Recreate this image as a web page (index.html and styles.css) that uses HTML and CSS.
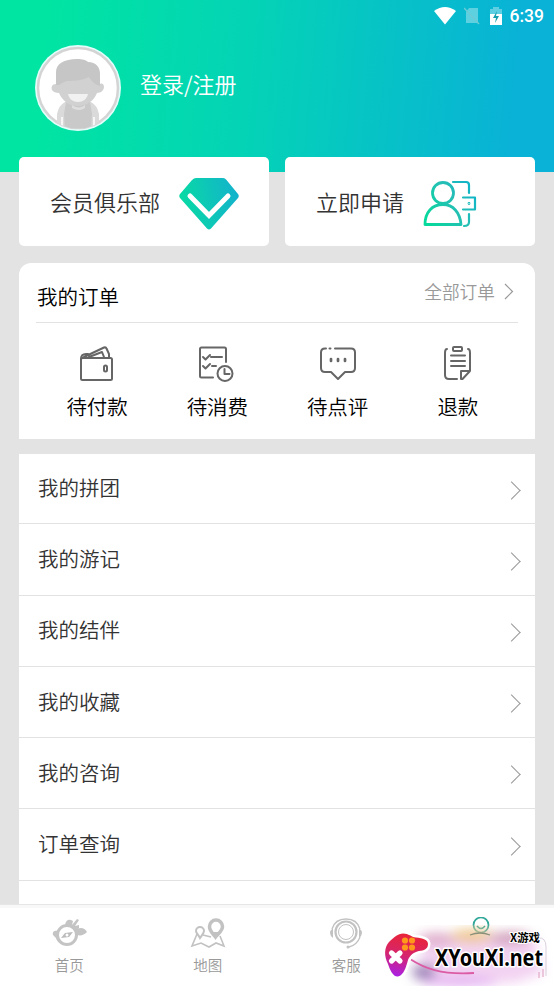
FILE: index.html
```html
<!DOCTYPE html>
<html lang="zh-CN">
<head>
<meta charset="utf-8">
<title>我的</title>
<link rel="stylesheet" href="styles.css">
</head>
<body>
<div class="phone">
  <main class="content">
    <header class="header">
      <div class="status">
        <svg class="wifi" width="22" height="18" viewBox="0 0 22 18"><path d="M0 4Q11-4 22 4L11 17.500Z" fill="#fff"/></svg>
        <svg class="sim" width="17" height="18" viewBox="0 0 17 18"><path d="M5 1h9v15H2V5z" fill="#fff" opacity=".35"/><path d="M0 1l15 16" stroke="#6ccbd5" stroke-width="1.500"/></svg>
        <svg class="battery" width="12" height="18" viewBox="0 0 12 18"><path d="M3 2V0h6v2h3v5H0V2z" fill="#fff" opacity=".35"/><path d="M0 7h12v11H0z" fill="#fff"/><path d="M7 4L3 11h3l-1 5 4-7H6z" fill="#159ead"/></svg>
        <span class="time">6:39</span>
      </div>
      <div class="profile">
        <svg class="avatar" width="88" height="88" viewBox="0 0 88 88">
          <defs><clipPath id="face"><circle cx="44" cy="44" r="40.500"/></clipPath></defs>
          <circle cx="44" cy="44" r="43" fill="#e3fdfa"/>
          <circle cx="44" cy="44" r="40" fill="#fff" stroke="#d4d4d4" stroke-width="2.500"/>
          <g clip-path="url(#face)">
            <path d="M31 58q-6 3-8 12v18h42V70q-2-9-8-12z" fill="#dadada"/>
            <path d="M32 58h24l2 12-1 18H31l-1-18z" fill="#c9c9c9"/>
            <path d="M28 73v15M60 73v15" stroke="#fff" stroke-width="1.500"/>
            <path d="M22 40c-4 0-5 3-4 6 1 2 4 3 7 3 4 9 11 13 19 13s16-5 19-13c4 0 7-3 7-6 0-4-3-4-5-3V28H22z" fill="#d1d1d1"/>
            <path d="M22 41V28c0-8 8-13 21-13 6 0 9 1 11 3 8 0 12 5 12 12v12l-3-1c-4-2-6-5-8-8-6 3-13 4-22 4-4 1-6 3-8 4z" fill="#c6c6c6"/>
            <path d="M34 50h20c-1 5-5 8-10 8s-9-3-10-8z" fill="#f1f1f1"/>
            <path d="M38 61q7 5 13 0v3q-6 4-13 0z" fill="#dedede"/>
          </g>
        </svg>
        <span class="login">登录/注册</span>
      </div>
    </header>

    <section class="promos">
      <a class="promo club"><span>会员俱乐部</span>
        <svg width="60" height="54" viewBox="0 0 60 54">
          <defs><linearGradient id="gem" x1="0" y1=".5" x2="1" y2=".35"><stop stop-color="#08dba3"/><stop offset="1" stop-color="#13b2cc"/></linearGradient></defs>
          <path d="M17 1h27q2 0 3.500 2L59 17q1.500 2 0 4L32 51.500q-2 2-4 0L1 21q-1.500-2 0-4L13 3q2-2 4-2z" fill="url(#gem)"/>
          <path d="M11 19l19 19.500L49 19" fill="none" stroke="#fff" stroke-width="5" stroke-linecap="round"/>
        </svg>
      </a>
      <a class="promo apply"><span>立即申请</span>
        <svg width="54" height="50" viewBox="0 0 54 50" fill="none" stroke="url(#person)" stroke-width="2.800" stroke-linecap="round" stroke-linejoin="round">
          <defs><linearGradient id="person" gradientUnits="userSpaceOnUse" x1="3" y1="42" x2="52" y2="12"><stop stop-color="#05d99b"/><stop offset=".6" stop-color="#26beb5"/><stop offset="1" stop-color="#0db4c9"/></linearGradient></defs>
          <circle cx="20" cy="14" r="10.500"/>
          <path d="M2 45.500c0-12 7-20 18-20 10 0 17 8 18 20z"/>
          <path d="M30 3h13q3 0 3 3v8M40 18.500h12v12H40M46 35v8q0 4-5 4" stroke-width="2.200"/>
          <circle cx="46" cy="24.500" r=".4" stroke-width="2"/>
        </svg>
      </a>
    </section>

    <section class="orders">
      <div class="orders-head"><h2>我的订单</h2><a class="all">全部订单<svg width="10" height="17" viewBox="0 0 10 17"><path d="M1 1l7.500 7.500L1 16" fill="none" stroke="#999" stroke-width="1.200"/></svg></a></div>
      <div class="order-types">
        <a class="type"><svg width="38" height="38" viewBox="0 0 38 38"><rect x="3" y="14" width="31" height="22" rx="1.500"/><path d="M3 15q0-5 5-5h2M6 13L26 3.500q2-.5 2.500 1L31 10v4M11 13l13-5 2 5"/><rect x="26" y="21.500" width="3" height="6" rx="1.500"/></svg>待付款</a>
        <a class="type"><svg width="38" height="38" viewBox="0 0 38 38"><g transform="translate(-2)"><path d="M30 18V5q0-1.500-1.500-1.500h-23Q4 3.500 4 5v27q0 1.500 1.500 1.500H17M7 13l2.500 2.500L14 11M15 13h11M7 22l2.500 2.500L14 20M16 22h4"/><circle cx="29" cy="29.500" r="7.500"/><path d="M28.500 25v5h5"/></g></svg>待消费</a>
        <a class="type"><svg width="38" height="38" viewBox="0 0 38 38"><path d="M7 4.500H6q-4 0-4 4V24q0 4 4 4h6l7 7 7-7h6q4 0 4-4V8.500q0-4-4-4H16M10.500 4.500h1"/><path d="M12 15v2M19 15v2M26 15v2" stroke-width="2.700"/></svg>待点评</a>
        <a class="type"><svg width="38" height="38" viewBox="0 0 38 38"><path d="M8 5q-2 0-2 4v22q0 4 4 4h8M29 5q2 0 2 4v18l-7.500 8H22v-8h9"/><rect x="14" y="3" width="9" height="4" rx="1"/><path d="M12 11.500h14M12 17h14M12 22h14"/></svg>退款</a>
      </div>
    </section>

    <nav class="menu">
      <a class="row"><span>我的拼团</span><i class="chevron"></i></a>
      <a class="row"><span>我的游记</span><i class="chevron"></i></a>
      <a class="row"><span>我的结伴</span><i class="chevron"></i></a>
      <a class="row"><span>我的收藏</span><i class="chevron"></i></a>
      <a class="row"><span>我的咨询</span><i class="chevron"></i></a>
      <a class="row"><span>订单查询</span><i class="chevron"></i></a>
      <a class="row"></a>
    </nav>
  </main>

  <footer class="tabs">
    <a class="tab"><svg width="36" height="32" viewBox="0 0 36 32">
      <circle cx="16" cy="18" r="9.500" fill="none" stroke="#c4c4c4" stroke-width="3"/>
      <path d="M14 8q1-6 6-5l2 1-1 4 5-6 2 1-4 6 4-1v3l-2 1c4-2 8-1 10 3-3 3-6 4-10 3l-2-6zM8 14c-4-1-7 0-6 4l3 3c1 4 5 7 10 7l-7-5z" fill="#c4c4c4"/>
      <path d="M10 21l4-5 8-1-4 5z" fill="#bbb"/><circle cx="16" cy="18" r="1.500" fill="#fff"/></svg>首页</a>
    <a class="tab"><svg width="36" height="32" viewBox="0 0 36 32" fill="none" stroke="#c2c2c2">
      <path d="M7 17L2 29l9-3 8 4 7-4 8 3-4-10M13 18l8 2" stroke-width="1.600"/>
      <path d="M10 21c-2-4-4-5-4-7a4 4 0 018 0c0 2-2 4-4 7z" stroke-width="2"/>
      <path d="M25.500 20c-3-4-6-6-6-10.500a6.500 6.500 0 0113 0c0 4.500-4 6.500-7 10.500z" stroke-width="3.500"/><path d="M22 15h7l-3.500 6z" fill="#c2c2c2" stroke="none"/></svg>地图</a>
    <a class="tab"><svg width="36" height="32" viewBox="0 0 36 32" fill="none" stroke="#c2c2c2">
      <circle cx="18" cy="15" r="10.500" stroke-width="2.200"/><circle cx="18" cy="15" r="7.500" stroke-width="1"/>
      <path d="M4 12Q7 2 18 2t14 10M32 20q-3 8-11 10" stroke-width="1.300"/><path d="M5 11q-6 5 0 10zM31 11q6 5 0 10z" fill="#c2c2c2" stroke="none"/><circle cx="20" cy="30" r="1.500" fill="#c2c2c2" stroke="none"/></svg>客服</a>
    <a class="tab mine"><svg width="36" height="32" viewBox="0 0 36 32" fill="none" stroke="#30a798"><circle cx="14" cy="8" r="7.500" stroke-width="1.700"/><path d="M10 9q4 5 8 0" stroke-width="1.500"/></svg></a>
  </footer>

  <aside class="watermark">
    <svg width="178" height="61" viewBox="0 0 178 61">
      <defs>
        <filter id="soft" x="-30%" y="-50%" width="160%" height="200%"><feGaussianBlur stdDeviation="6"/></filter>
        <linearGradient id="pad" x1=".5" y1="0" x2=".3" y2="1"><stop stop-color="#e92437"/><stop offset=".5" stop-color="#d6256c"/><stop offset="1" stop-color="#aa20e4"/></linearGradient>
      </defs>
      <g filter="url(#soft)">
        <path d="M50 10h106l12 38-30 10H65L44 38z" fill="#f3d3f2"/>
        <ellipse cx="61" cy="14" rx="20" ry="6" fill="#dda8c6"/>
        <ellipse cx="96" cy="11" rx="21" ry="7" fill="#eec78f"/>
        <ellipse cx="134" cy="13" rx="21" ry="6" fill="#cf9bb5"/>
        <ellipse cx="48" cy="47" rx="12" ry="8" fill="#9e85b8"/>
        <ellipse cx="84" cy="57" rx="38" ry="5" fill="#e2aef2"/>
      </g>
      <path d="M34 34c14 9 30 16 64 14" fill="none" stroke="#db5ba4" stroke-width="1.800"/>
      <path d="M94 10q10-4 20 0" fill="none" stroke="#8a8f79" stroke-width="1.300"/>
      <path d="M162 13q8-1 8 9v29" fill="none" stroke="#d9cfdc" stroke-width="1"/>
      <path d="M163 47v6M167 44v8" stroke="#dc9abd" stroke-width="1"/>
      <path d="M13 17C18 12 22 9 27 8.500C33 8.500 35 12 40 12.500C47 13 52 15 52 19C52 24 48 25.500 43 26C38 27 34 30 32 35C30 42 28 50 22 51.500C17 52 14 45 12 39C8 31 8 23 13 17Z" fill="url(#pad)" stroke="#fff" stroke-width="5" stroke-linejoin="round" paint-order="stroke"/>
      <g fill="#ff991c"><circle cx="29" cy="15.500" r="3.100"/><circle cx="36" cy="15.500" r="3.100"/><circle cx="29" cy="22.500" r="3.100"/><circle cx="36" cy="22.500" r="3.100"/></g>
      <path d="M15.500 28l8.500 8M24 28l-8.500 8" stroke="#fff" stroke-width="5.200" stroke-linecap="round"/>
      <text class="brand-small" x="134" y="17" textLength="30" lengthAdjust="spacingAndGlyphs">X游戏</text>
      <text class="brand" x="59" y="41" textLength="108" lengthAdjust="spacingAndGlyphs">XYouXi.net</text>
    </svg>
  </aside>
</div>
</body>
</html>
```
FILE: styles.css
```css
* { box-sizing: border-box; }
body {
  margin: 0;
  font-family: "Noto Sans CJK SC", sans-serif;
  font-weight: 350;
  color: #333;
}
.phone {
  position: relative;
  width: 554px;
  height: 986px;
  display: flex;
  flex-direction: column;
  overflow: hidden;
  background: #e3e3e3;
}
.content { flex: 1; min-height: 0; overflow: hidden; }
.header {
  height: 172px;
  background: linear-gradient(95deg, #00e5a2 8%, #04d3b6 45%, #09b2d6 92%);
}
.status {
  height: 32px;
  padding-right: 10px;
  display: flex;
  align-items: center;
  justify-content: flex-end;
  color: #fff;
}
.wifi { margin-right: 8px; }
.sim { margin-right: 9px; }
.battery { margin-right: 8px; }
.time { font: 500 17.5px/32px Roboto, sans-serif; }
.profile {
  padding: 12px 0 0 34px;
  display: flex;
  align-items: center;
  gap: 18px;
}
.login { font-size: 22px; line-height: 32px; color: #fff; margin-top: -11px; }
.promos {
  position: relative;
  margin: -15px 19px 0;
  display: grid;
  grid-template-columns: 1fr 1fr;
  gap: 16px;
}
.promo {
  height: 89px;
  display: flex;
  align-items: center;
  gap: 19px;
  padding-left: 31px;
  background: #fff;
  border-radius: 5px;
  font-size: 22px;
}
.promo span { margin-top: -2px; }
.promo svg { margin-top: 4px; }
.apply svg { margin-top: 5px; }
.orders {
  margin: 17px 19px 0;
  height: 176px;
  background: #fff;
  border-radius: 12px 12px 0 0;
}
.orders-head {
  margin: 0 17px;
  height: 60px;
  padding: 6px 4px 0 1px;
  border-bottom: 1px solid #e2e2e2;
  display: flex;
  align-items: center;
  justify-content: space-between;
}
.orders-head h2 { margin: 0; font-size: 20.5px; font-weight: 350; color: #000; }
.all { display: flex; align-items: center; gap: 9px; margin-top: -9px; font-size: 17.7px; color: #999; }
.order-types {
  padding: 21px 17px 0 18px;
  display: grid;
  grid-template-columns: repeat(4, 1fr);
}
.type {
  display: flex;
  flex-direction: column;
  align-items: center;
  font-size: 20.5px;
  line-height: 30px;
  color: #000;
  gap: 9px;
}
.type svg { fill: none; stroke: #666; stroke-width: 2; stroke-linecap: round; stroke-linejoin: round; }
.menu { margin: 15px 19px 0; background: #fff; }
.row {
  height: 71.25px;
  padding: 0 14px 2px 19px;
  display: flex;
  align-items: center;
  justify-content: space-between;
  border-bottom: 1px solid #e2e2e2;
  font-size: 20.5px;
}
.row:first-child { height: 70.4px; }
.row span { margin-top: -1px; }
.chevron {
  width: 13px;
  height: 13px;
  margin: 5px 3px 0 0;
  border: solid #999;
  border-width: 1px 1px 0 0;
  transform: rotate(45deg);
}
.tabs {
  height: 82px;
  flex: none;
  display: grid;
  grid-template-columns: repeat(4, 1fr);
  background: #fff;
  border-top: 1px solid #e6e6e6;
  box-shadow: inset 0 3px #f8f8f8;
}
.tab {
  display: flex;
  flex-direction: column;
  align-items: center;
  padding-top: 12px;
  gap: 5px;
  font-size: 14.5px;
  line-height: 22px;
  color: #999;
}
.watermark { position: absolute; left: 376px; top: 925px; width: 178px; height: 61px; }
.watermark svg { display: block; }
.brand, .brand-small { fill: #000; stroke: #fff; stroke-width: 3px; paint-order: stroke; stroke-linejoin: round; }
.brand { font: 700 23px "Noto Sans", sans-serif; }
.brand-small { font: 700 11px "Noto Sans CJK SC", sans-serif; stroke-width: 2px; }
```
